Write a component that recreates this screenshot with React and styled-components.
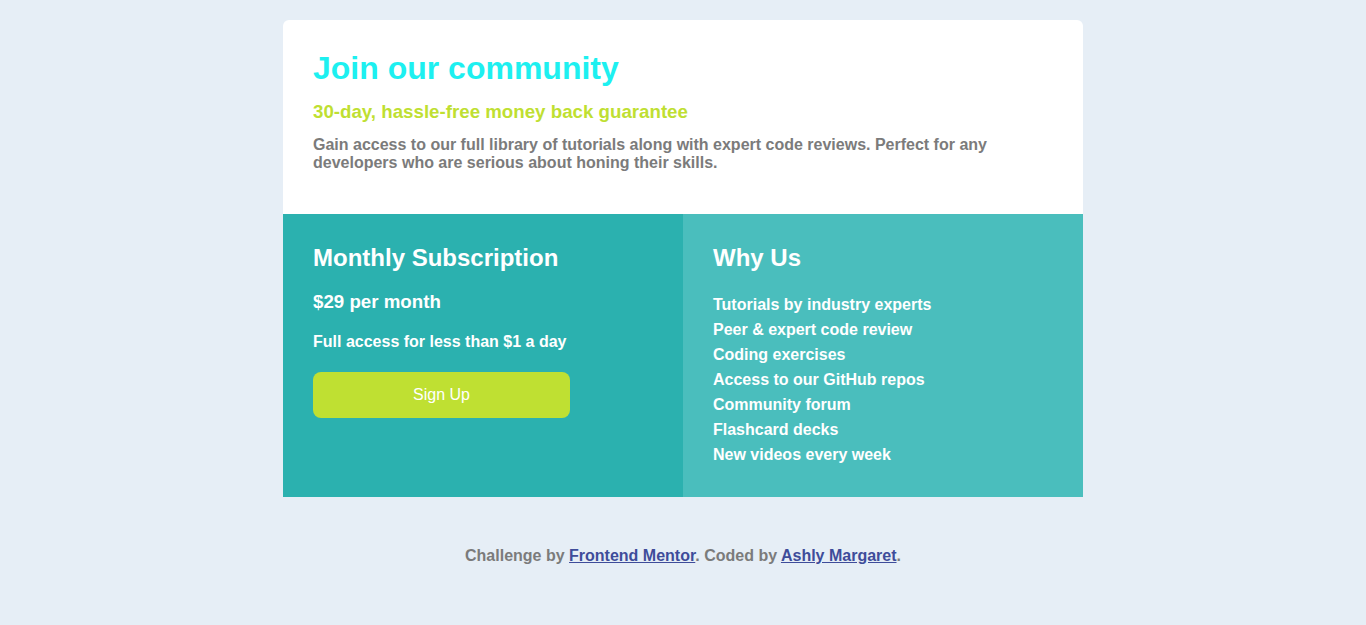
import React from 'react';
import styled, { createGlobalStyle } from 'styled-components';

const GlobalStyle = createGlobalStyle`
    body {
        margin: 0;
        background: #e6eef6;
        font-family: 'Liberation Sans', Arial, sans-serif;
    }
`;

const Page = styled.div`
    display: flex;
    flex-direction: column;
    align-items: center;
    padding-top: 20px;
`;

const Card = styled.main`
    width: 800px;
    border-radius: 6px 6px 0 0;
    overflow: hidden;
`;

const Top = styled.section`
    background: #fff;
    padding: 30px 30px 42px;
    & h1 {
        margin: 0;
        font-size: 32px;
        line-height: 37px;
        color: #1df0f0;
    }
    & h3 {
        margin: 14px 0 0;
        font-size: 18.72px;
        line-height: 22px;
        color: #bfdf32;
    }
    & p {
        margin: 13px 0 0;
        font-size: 16px;
        line-height: 18px;
        font-weight: bold;
        color: #7b7b7b;
        padding-right: 60px;
    }
`;

const Bottom = styled.div`
    display: grid;
    grid-template-columns: 1fr 1fr;
`;

const Panel = styled.section`
    background: ${(p) => p.$bg};
    color: #fff;
    padding: 30px;
    & h2 {
        margin: 0;
        font-size: 24px;
        line-height: 28px;
    }
`;

const Price = styled.div`
    margin-top: 19px;
    font-size: 18.72px;
    line-height: 22px;
    font-weight: bold;
`;

const Note = styled.div`
    margin-top: 20px;
    font-size: 16px;
    line-height: 18px;
    font-weight: bold;
`;

const Button = styled.button`
    margin-top: 21px;
    width: 257px;
    height: 46px;
    border: none;
    border-radius: 8px;
    background: #bfe032;
    color: #fff;
    font-family: inherit;
    font-size: 16px;
    cursor: pointer;
`;

const List = styled.ul`
    list-style: none;
    margin: 20px 0 0;
    padding: 0;
    & li {
        font-size: 16px;
        line-height: 25px;
        font-weight: bold;
    }
`;

const Footer = styled.footer`
    margin-top: 50px;
    font-size: 16px;
    line-height: 18px;
    font-weight: bold;
    color: #7b7b7b;
    text-align: center;
    & a {
        color: #3e4c9a;
    }
`;

const perks = [
    'Tutorials by industry experts',
    'Peer & expert code review',
    'Coding exercises',
    'Access to our GitHub repos',
    'Community forum',
    'Flashcard decks',
    'New videos every week',
];

const App = () => {
    return (
        <Page>
            <GlobalStyle />
            <Card>
                <Top>
                    <h1>Join our community</h1>
                    <h3>30-day, hassle-free money back guarantee</h3>
                    <p>
                        Gain access to our full library of tutorials along with expert code
                        reviews. Perfect for any developers who are serious about honing
                        their skills.
                    </p>
                </Top>
                <Bottom>
                    <Panel $bg="#2bb1af">
                        <h2>Monthly Subscription</h2>
                        <Price>$29 per month</Price>
                        <Note>Full access for less than $1 a day</Note>
                        <Button>Sign Up</Button>
                    </Panel>
                    <Panel $bg="#4abebd">
                        <h2>Why Us</h2>
                        <List>
                            {perks.map((item) => (
                                <li key={item}>{item}</li>
                            ))}
                        </List>
                    </Panel>
                </Bottom>
            </Card>
            <Footer>
                Challenge by <a href="#">Frontend Mentor</a>. Coded by{' '}
                <a href="#">Ashly Margaret</a>.
            </Footer>
        </Page>
    );
};

export default App;
